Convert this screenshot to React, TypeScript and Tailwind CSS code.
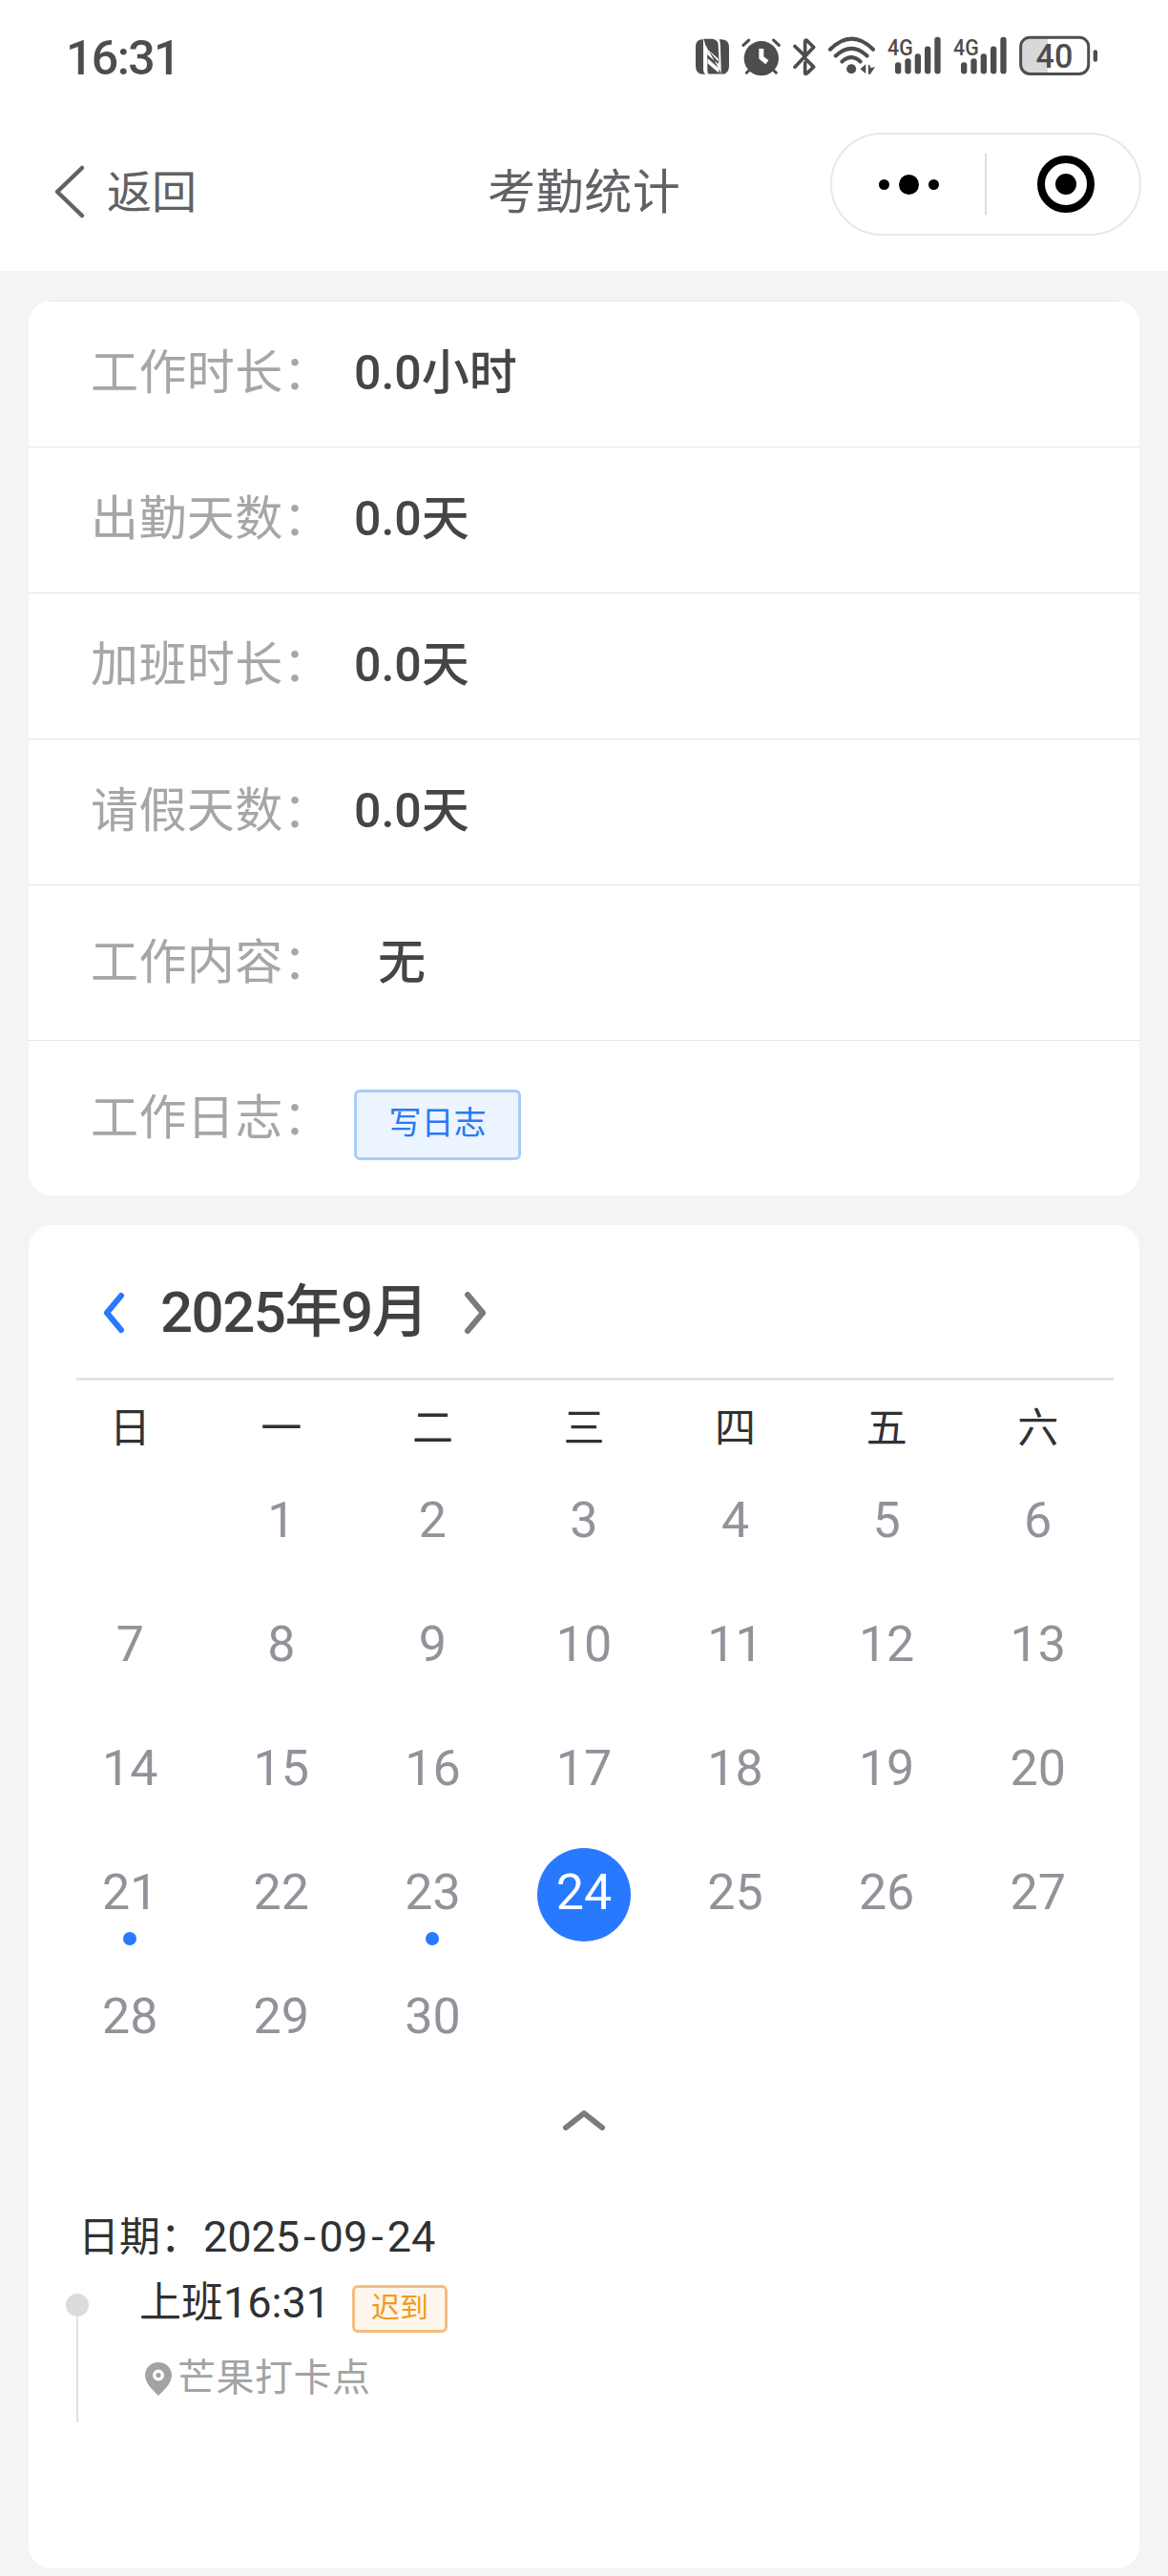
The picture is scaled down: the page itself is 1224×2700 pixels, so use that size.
import { ReactNode } from 'react';
import clsx from 'clsx';

const stats = [
  { label: '工作时长：', value: '0.0小时' },
  { label: '出勤天数：', value: '0.0天' },
  { label: '加班时长：', value: '0.0天' },
  { label: '请假天数：', value: '0.0天' },
];

const weekdays = ['日', '一', '二', '三', '四', '五', '六'];

// September 2025 starts on a Monday
const leadingBlanks = 1;
const daysInMonth = 30;
const selectedDay = 24;
const markedDays = [21, 23];

function NfcIcon() {
  return (
    <svg className="h-[43px] w-[35px]" viewBox="0 0 105 128" fill="#4d4d4d">
      <path d="M24 12h-2Q0 12 0 36v60q0 24 22 26h10q-8-4-8-16z" />
      <path fillRule="evenodd" d="M25 11H52q19 2 19 20l3 55-38-44 1 68q0 8 3 11h42L31 30q-2-6-6-19z M36 42l35 31v17L37 60z M38 72l35 32v14L38 88z" />
      <path d="M74 12h8q23 2 23 24v60q0 24-22 26-3-3-3-12l-2-72q0-18-4-26z" />
    </svg>
  );
}

function AlarmIcon() {
  return (
    <svg className="h-[43px] w-[41px]" viewBox="0 0 122 128" fill="none" stroke="#4d4d4d" strokeWidth="9" strokeLinecap="round">
      <circle cx="62" cy="72" r="54" fill="#4d4d4d" stroke="none" />
      <path d="M6 31 23 15M117 31 100 15M16 117l12-12M108 117l-12-12" />
      <path d="M62 42v28l18 14" stroke="#fff" strokeWidth="15" strokeLinecap="butt" strokeLinejoin="round" />
    </svg>
  );
}

function BluetoothIcon() {
  return (
    <svg className="h-[43px] w-[24px]" viewBox="0 0 72 128" fill="none" stroke="#4d4d4d" strokeWidth="11" strokeLinecap="round" strokeLinejoin="round">
      <path d="M6 34l30 29M6 99l59-62-21-21q-6-3-6 4v42M38 86v32q0 5 6 1l21-20-23-23" />
    </svg>
  );
}

function WifiIcon() {
  return (
    <svg className="h-[43px] w-[49px]" viewBox="0 0 146 128" fill="none" stroke="#4d4d4d" strokeWidth="12" strokeLinecap="round">
      <path d="M6 44q67-66 134 0M23 64q50-46 98 0M43 82q29-26 57 0" />
      <circle cx="72" cy="105" r="15" fill="#4d4d4d" stroke="none" />
      <path d="M100 105l17-15v30zM125 91l6 4v7l15-3-15 22h-6z" fill="#4d4d4d" stroke="none" />
    </svg>
  );
}

function SignalIcon() {
  return (
    <svg className="h-[43px] w-[56px] overflow-visible" viewBox="0 0 168 128" fill="#4d4d4d">
      <text x="0" y="61" fontSize="74" fontWeight="500" textLength="80" lengthAdjust="spacingAndGlyphs">
        4G
      </text>
      <rect x="24" y="84" width="19" height="37" rx="9" />
      <rect x="55" y="72" width="19" height="49" rx="9" />
      <rect x="86" y="57" width="19" height="64" rx="9" />
      <rect x="117" y="34" width="19" height="87" rx="9" />
      <rect x="148" y="5" width="19" height="116" rx="9" />
    </svg>
  );
}

function BatteryIcon() {
  return (
    <svg className="h-[43px] w-[83px] overflow-visible" viewBox="0 0 250 128">
      <path d="M34 8h56v112H34Q8 120 8 92V36Q8 8 34 8z" fill="#d8d8d8" />
      <rect x="5" y="6" width="214" height="115" rx="29" fill="none" stroke="#4d4d4d" strokeWidth="9" />
      <rect x="234" y="45" width="13" height="38" rx="6" fill="#4d4d4d" />
      <text x="53" y="102" fontSize="106" fontWeight="500" fill="#4d4d4d" textLength="117" lengthAdjust="spacingAndGlyphs">
        40
      </text>
    </svg>
  );
}

function StatusBar() {
  return (
    <div className="flex h-[116px] items-start justify-between pt-[37px] pr-[73px] pl-[69px] text-[#4d4d4d]">
      <span className="pt-px text-[50px] leading-[46px] font-medium tracking-[-1.6px]">16:31</span>
      <div className="flex gap-[13px]">
        <NfcIcon />
        <AlarmIcon />
        <BluetoothIcon />
        <WifiIcon />
        <SignalIcon />
        <SignalIcon />
        <BatteryIcon />
      </div>
    </div>
  );
}

function NavBar() {
  return (
    <div className="flex h-[168px] items-start pr-7 pl-[56px] text-[#606266]">
      <div className="flex w-[455px] items-center pt-[55px]">
        <svg className="h-[58px] w-[34px]" viewBox="0 0 34 58" fill="none" stroke="currentColor" strokeWidth="4.5" strokeLinecap="round" strokeLinejoin="round">
          <path d="M30 4 4 29l26 25" />
        </svg>
        <span className="ml-[22px] pt-[2px] text-[47px] leading-[58px]">返回</span>
      </div>
      <h1 className="pt-[56px] text-[50px] leading-[60px] tracking-[0.6px]">考勤统计</h1>
      <div className="mt-[23px] ml-auto flex h-[108px] w-[326px] items-center rounded-full border-2 border-[#e8e8e8] text-black">
        <div className="flex w-[160px] items-center justify-center gap-[10px]">
          <span className="size-[11px] rounded-full bg-black" />
          <span className="size-[21px] rounded-full bg-black" />
          <span className="size-[11px] rounded-full bg-black" />
        </div>
        <span className="h-16 w-0.5 bg-[#dddddd]" />
        <div className="flex w-[160px] justify-center pl-[6px]">
          <span className="flex size-[60px] items-center justify-center rounded-full border-8 border-black">
            <span className="size-[22px] rounded-full bg-black" />
          </span>
        </div>
      </div>
    </div>
  );
}

function StatRow({ label, className, children }: { label: string; className: string; children: ReactNode }) {
  return (
    <div className={clsx('flex items-start border-t border-[#e4e7ed] pl-[65px]', className)}>
      <span className="w-[276px] text-[50px] leading-[60px] tracking-[0.4px] whitespace-nowrap text-[#a6a6a6]">{label}</span>
      {children}
    </div>
  );
}

function StatsCard() {
  return (
    <section className="h-[938px] overflow-hidden rounded-[24px] bg-white">
      {stats.map((s) => (
        <StatRow key={s.label} label={s.label} className="h-[153px] pt-[45px]">
          <span className="text-[50px] leading-[60px] font-medium text-[#454545]">{s.value}</span>
        </StatRow>
      ))}
      <StatRow label="工作内容：" className="h-[163px] pt-[51px]">
        <span className="pl-[25px] text-[50px] leading-[60px] font-medium text-[#454545]">无</span>
      </StatRow>
      <StatRow label="工作日志：" className="h-[163px] pt-[51px]">
        <button
          type="button"
          className="h-[74px] w-[175px] rounded-[6px] border-[3px] border-[#a6cdf8] bg-[#ebf4ff] pb-[5px] text-[34px] leading-[60px] text-[#2979f2]"
        >
          写日志
        </button>
      </StatRow>
    </section>
  );
}

function Calendar() {
  const days = Array.from({ length: daysInMonth }, (_, i) => i + 1);

  return (
    <div>
      <div className="ml-[50px] flex h-[163px] w-[1087px] items-center border-b-[3px] border-[#e4e4e4] pt-[24px] pl-[28px]">
        <svg className="h-[44px] w-[24px]" viewBox="0 0 24 44" fill="none" stroke="#2979ff" strokeWidth="6" strokeLinecap="round" strokeLinejoin="round">
          <path d="M19 4 4 22l15 18" />
        </svg>
        <h2 className="mr-[42px] ml-[36px] w-[276px] text-[60px] leading-[72px] font-medium tracking-[-1.5px] whitespace-nowrap text-[#414141]">2025年9月</h2>
        <svg className="h-[46px] w-[24px]" viewBox="0 0 24 46" fill="none" stroke="#7b7b7b" strokeWidth="6" strokeLinecap="round" strokeLinejoin="round">
          <path d="M4 4l16 19L4 42" />
        </svg>
      </div>
      <div className="ml-[27px] grid w-[1110px] grid-cols-7 text-center">
        {weekdays.map((d) => (
          <span key={d} className="h-[81px] pt-[22px] text-[43px] leading-[56px] text-[#303133]">
            {d}
          </span>
        ))}
        {Array.from({ length: leadingBlanks }, (_, i) => (
          <span key={`blank-${i}`} />
        ))}
        {days.map((day) => (
          <div key={day} className="flex h-[130px] flex-col items-center pt-[19px]">
            <span
              className={clsx(
                'size-[98px] rounded-full text-[52px] leading-[94px]',
                day === selectedDay ? 'bg-[#2979ff] text-white' : 'text-[#909399]',
              )}
            >
              {day}
            </span>
            {markedDays.includes(day) && <span className="mt-[-10px] size-[14px] shrink-0 rounded-full bg-[#2979ff]" />}
          </div>
        ))}
      </div>
      <div className="flex justify-center pt-[33px]">
        <svg className="h-[24px] w-[46px]" viewBox="0 0 46 24" fill="none" stroke="#7b7b7b" strokeWidth="6" strokeLinecap="round" strokeLinejoin="round">
          <path d="M4 19 23 4l19 15" />
        </svg>
      </div>
    </div>
  );
}

function PunchRecord() {
  return (
    <div className="pt-[82px] pl-[39px] text-[#303133]">
      <div className="pl-[13px] text-[45px] leading-[56px] whitespace-nowrap">
        <span className="text-[43px]">日期：</span>
        <span className="ml-[2px]">
          2025<span className="mx-[4px]">-</span>09<span className="mx-[4px]">-</span>24
        </span>
      </div>
      <div className="flex">
        <div className="flex w-[24px] flex-col items-center pt-[31px]">
          <span className="size-[24px] rounded-full bg-[#dcdcdc]" />
          <span className="h-[111px] w-0.5 bg-[#e2e2e2]" />
        </div>
        <div className="pl-[53px]">
          <div className="flex h-[78px] items-start pt-[13px]">
            <span className="text-[45px] leading-[56px]">
              <span className="text-[44px]">上班</span>16:31
            </span>
            <span className="mt-[9px] ml-[23px] h-[50px] w-[100px] rounded-[6px] border-[3px] border-[#f3bd7d] bg-[#fef6ed] text-center text-[30px] leading-[41px] text-[#f19b1a]">
              迟到
            </span>
          </div>
          <div className="flex items-center pt-[16px] pl-[6px] text-[40px] leading-[52px] tracking-[0.5px] text-[#a3a3a3]">
            <svg className="mr-[6px] h-[35px] w-[28px]" viewBox="0 0 28 35" fill="currentColor">
              <path fillRule="evenodd" d="M14 0C6 0 0 6 0 13.500C0 22 8 29 14 35C20 29 28 22 28 13.500C28 6 22 0 14 0zM14 7.500a6 6 0 1 1 0 12 6 6 0 0 1 0-12z" />
              <circle cx="14" cy="13.500" r="2.600" />
            </svg>
            芒果打卡点
          </div>
        </div>
      </div>
    </div>
  );
}

export default function App() {
  return (
    <div className="h-[2700px] w-[1224px] overflow-hidden bg-[#f4f4f4] font-['Roboto','Noto_Sans_CJK_SC',sans-serif]">
      <header className="bg-white">
        <StatusBar />
        <NavBar />
      </header>
      <main className="flex flex-col gap-[31px] px-[30px] pt-[31px]">
        <StatsCard />
        <section className="h-[1408px] rounded-[24px] bg-white">
          <Calendar />
          <PunchRecord />
        </section>
      </main>
    </div>
  );
}
